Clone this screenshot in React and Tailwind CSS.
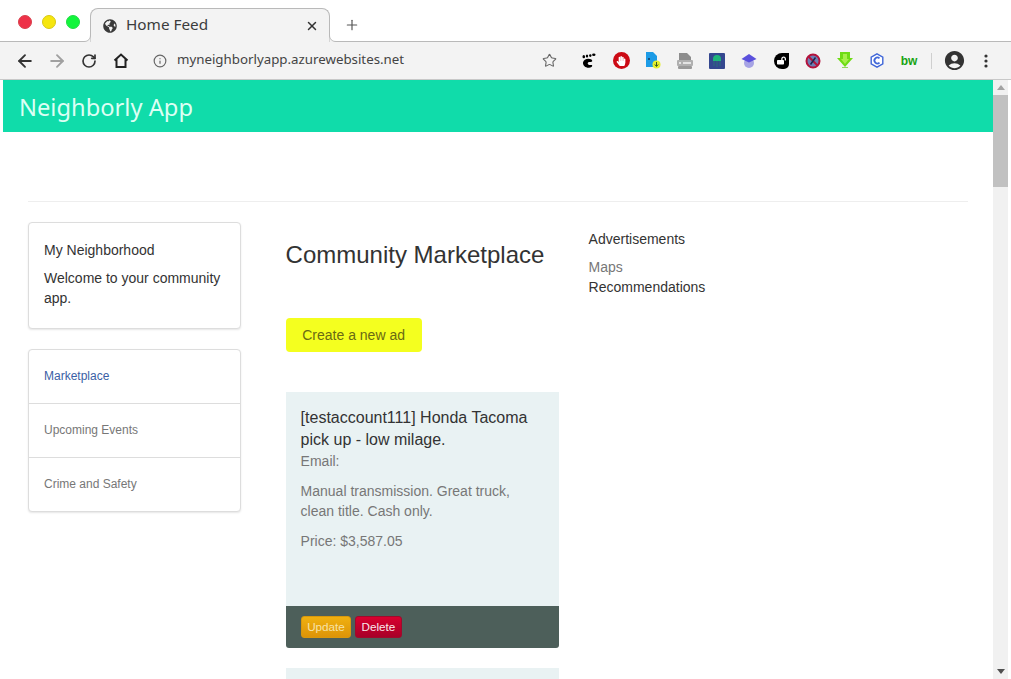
import React from 'react';
import { ArrowLeft, ArrowRight, RotateCw, Info, Star, Plus, X } from 'lucide-react';
import { FaGlobeAmericas, FaHandPaper, FaLockOpen } from 'react-icons/fa';
import { MdAccountCircle } from 'react-icons/md';

const sans = "font-['Liberation_Sans',Arial,sans-serif]";

const Gnome = () => (
  <svg width="14" height="15" viewBox="0 0 14 15" fill="#000">
    <path d="M9.500 6.500C6.500 4.800 1.500 5.800 1 9.500.6 12.800 4 15 7 14.700c2-.2 3.500-1.300 3.200-2.300-.3-1-1.800-.2-3-.4-1.500-.3-2-1.900-.9-2.700 1-.7 2.500-.2 3.300-.5.900-.4.800-1.400-.1-2.300z" />
    <ellipse cx="1.800" cy="3.700" rx="1.300" ry="1.600" />
    <ellipse cx="5" cy="3" rx="1.200" ry="1.500" />
    <ellipse cx="8.300" cy="2.600" rx="1.200" ry="1.300" />
    <ellipse cx="11.800" cy="1.800" rx="1.700" ry="1.200" />
  </svg>
);

const Blocker = () => (
  <div className="w-[17px] h-[17px] rounded-full bg-[#cc0a14] flex items-center justify-center">
    <FaHandPaper size={10} color="#fff" />
  </div>
);

const DocSave = () => (
  <svg width="16" height="17" viewBox="0 0 16 17">
    <path d="M1 0h7l4 4v11H1z" fill="#1c9be6" />
    <circle cx="4" cy="7" r="1" fill="#123a5c" />
    <circle cx="11.500" cy="12.500" r="4" fill="#e6f02c" />
    <path d="M11.500 10v4M9.800 12.500l1.700 2 1.700-2" stroke="#3c5a1c" strokeWidth="1" fill="none" />
  </svg>
);

const Printer = () => (
  <svg width="16" height="16" viewBox="0 0 16 16">
    <path d="M2 0h8l4 4v3H2z" fill="#8d8d8d" />
    <rect x="0" y="7" width="16" height="6" rx="1" fill="#b0b0b0" />
    <rect x="6" y="9" width="8" height="2" fill="#e4e4e4" />
    <rect x="2" y="9" width="2" height="2" fill="#e4e4e4" />
    <rect x="1" y="13" width="14" height="3" rx="1" fill="#9a9a9a" />
  </svg>
);

const Jelly = () => (
  <svg width="16" height="16" viewBox="0 0 16 16">
    <rect width="16" height="16" rx="1" fill="#34478f" />
    <path d="M4 6a4 4 0 0 1 8 0v2H4z" fill="#1fb57a" />
    <path d="M5 8v5M8 8v6M11 8v5" stroke="#2a6f78" strokeWidth="1" />
  </svg>
);

const Cap = () => (
  <svg width="16" height="16" viewBox="0 0 16 16">
    <circle cx="8" cy="10" r="5" fill="#a6a3e4" />
    <path d="M8 1l7.500 5L8 9.500.5 6z" fill="#5a50dc" />
  </svg>
);

const Lock = () => (
  <div className="w-[15px] h-[16px] rounded-l-[8px] rounded-br-[5px] bg-black flex items-center justify-center">
    <FaLockOpen size={9} color="#fff" />
  </div>
);

const NoBug = () => (
  <svg width="16" height="16" viewBox="0 0 16 16">
    <circle cx="8" cy="8" r="6.500" fill="#6f7fb4" stroke="#b3123c" strokeWidth="2" />
    <path d="M3.500 3.500l9 9" stroke="#b3123c" strokeWidth="2" />
    <path d="M10.500 4.500l-5 7" stroke="#1c2550" strokeWidth="1.500" />
  </svg>
);

const GreenArrow = () => (
  <svg width="16" height="17" viewBox="0 0 16 17">
    <path d="M3 0h10v6h3l-8 9-8-9h3z" fill="#6fdc16" />
    <path d="M6 2h4v5h2l-4 5-4-5h2z" fill="#a6f04a" />
    <rect x="5" y="15" width="6" height="1" fill="#8fd85a" />
  </svg>
);

const Hex = () => (
  <svg width="14" height="15" viewBox="0 0 14 15">
    <path d="M7 .8l5.800 3.300v6.800L7 14.200 1.200 10.900V4.100z" fill="#fff" stroke="#3f66d8" strokeWidth="1.400" />
    <path d="M9.500 5.300a3 3 0 1 0 0 4.400" fill="none" stroke="#3f66d8" strokeWidth="1.800" />
  </svg>
);

const HomeIcon = () => (
  <svg width="16" height="15" viewBox="0 0 16 15" fill="none" stroke="#222" strokeWidth="2">
    <path d="M1.500 7.500L8 1.500l6.500 6M3.500 6v8h9V6" />
  </svg>
);

const extensions = [Gnome, Blocker, DocSave, Printer, Jelly, Cap, Lock, NoBug, GreenArrow, Hex];

const ToolIcon = ({ children }) => (
  <div className="w-8 h-8 flex items-center justify-center shrink-0">{children}</div>
);

const BrowserChrome = () => (
  <div className="shrink-0 font-['Noto_Sans',sans-serif]">
    <div className="h-[42px] flex items-end border-b border-[#b9b9b9] bg-white pl-[18px]">
      <div className="flex gap-[10px] self-start mt-[15px]">
        <div className="w-[14px] h-[14px] rounded-full bg-[#ee3148] border border-[#d8404c]" />
        <div className="w-[14px] h-[14px] rounded-full bg-[#f6e60e] border border-[#d8c814]" />
        <div className="w-[14px] h-[14px] rounded-full bg-[#12f53c] border border-[#22dc44]" />
      </div>
      <div className="relative ml-[10px] w-[240px] h-[34px] -mb-px bg-[#f3f3f3] border border-b-0 border-[#b9b9b9] rounded-t-[8px] flex items-center pl-[12px] pr-[10px]">
        {/* little flares where the tab meets the toolbar */}
        <svg className="absolute left-[-7px] bottom-0" width="7" height="7" viewBox="0 0 7 7">
          <path d="M0 6.500C4 6.500 6.500 4 6.500 0V7H0z" fill="#f3f3f3" />
          <path d="M0 6.500C4 6.500 6.500 4 6.500 0" fill="none" stroke="#b9b9b9" />
        </svg>
        <svg className="absolute right-[-7px] bottom-0" width="7" height="7" viewBox="0 0 7 7">
          <path d="M7 6.500C3 6.500 .5 4 .5 0V7H7z" fill="#f3f3f3" />
          <path d="M7 6.500C3 6.500 .5 4 .5 0" fill="none" stroke="#b9b9b9" />
        </svg>
        <FaGlobeAmericas size={14} color="#3a3a3a" />
        <span className="ml-[9px] mb-[2px] text-[15.3px] text-[#3c3c3c] flex-1 leading-none">Home Feed</span>
        <X size={14} color="#333" strokeWidth={2.5} />
      </div>
      <div className="ml-[14px] mb-[8px]">
        <Plus size={16} color="#555" strokeWidth={1.75} />
      </div>
    </div>
    <div className="h-[38px] bg-[#f3f3f3] border-b border-[#c8c8c8] flex items-center pl-[9px] pr-[9px]">
      <ToolIcon><ArrowLeft size={20} color="#333" strokeWidth={2.25} /></ToolIcon>
      <ToolIcon><ArrowRight size={20} color="#a0a0a0" strokeWidth={2.25} /></ToolIcon>
      <ToolIcon><RotateCw size={16} color="#333" strokeWidth={2.5} /></ToolIcon>
      <ToolIcon><HomeIcon /></ToolIcon>
      <div className="ml-[16px]"><Info size={14} color="#666" /></div>
      <span className="ml-[10px] mb-[1px] text-[13.3px] text-[#444] flex-1 leading-none">myneighborlyapp.azurewebsites.net</span>
      <ToolIcon><Star size={15} color="#666" strokeWidth={1.75} /></ToolIcon>
      <div className="w-[8px]" />
      {extensions.map((Ext, i) => (
        <ToolIcon key={i}><Ext /></ToolIcon>
      ))}
      <ToolIcon><span className={`${sans} text-[12px] font-bold text-[#17a312] leading-none`}>bw</span></ToolIcon>
      <div className="mx-[6px] w-px h-[16px] bg-[#cfcfcf]" />
      <ToolIcon><MdAccountCircle size={23} color="#333" /></ToolIcon>
      <ToolIcon>
        <svg width="4" height="14" viewBox="0 0 4 14" fill="#333">
          <circle cx="2" cy="2" r="1.600" />
          <circle cx="2" cy="7" r="1.600" />
          <circle cx="2" cy="12" r="1.600" />
        </svg>
      </ToolIcon>
    </div>
  </div>
);

const Scrollbar = () => (
  <div className="w-[15px] shrink-0 bg-[#f1f1f1] flex flex-col items-center justify-between">
    <div className="w-full">
      <div className="h-[15px] flex items-center justify-center">
        <div className="w-0 h-0 border-x-[4px] border-x-transparent border-b-[5px] border-b-[#a3a3a3]" />
      </div>
      <div className="h-[92px] bg-[#c1c1c1]" />
    </div>
    <div className="h-[15px] flex items-center justify-center">
      <div className="w-0 h-0 border-x-[4px] border-x-transparent border-t-[5px] border-t-[#505050]" />
    </div>
  </div>
);

const navItems = [
  { label: 'Marketplace', active: true },
  { label: 'Upcoming Events' },
  { label: 'Crime and Safety' },
];

const Sidebar = () => (
  <div className="w-[213px] shrink-0">
    <div className="h-[107px] bg-white border border-[#ddd] rounded-[4px] shadow-[0_1px_2px_rgba(0,0,0,0.1)] px-[15px] pt-[17px] text-[14px] leading-[20px] text-[#333]">
      <p className="mb-[8px]">My Neighborhood</p>
      <p>Welcome to your community app.</p>
    </div>
    <div className="mt-[20px] bg-white border border-[#ddd] rounded-[4px] shadow-[0_1px_2px_rgba(0,0,0,0.1)]">
      {navItems.map((item) => (
        <div
          key={item.label}
          className={`h-[54px] flex items-center px-[15px] pb-[2px] text-[12px] border-b border-[#ddd] last:border-b-0 last:h-[53px] ${item.active ? 'text-[#3b5fa5]' : 'text-[#777]'}`}
        >
          {item.label}
        </div>
      ))}
    </div>
  </div>
);

const AdCard = () => (
  <div className="rounded-b-[3px] overflow-hidden">
    <div className="h-[214px] bg-[#e9f2f3] px-[15px] pt-[15px]">
      <h4 className="text-[16px] leading-[22px] text-[#333]">[testaccount111] Honda Tacoma pick up - low milage.</h4>
      <p className="text-[14px] leading-[20px] text-[#777]">Email:</p>
      <p className="mt-[10px] text-[14px] leading-[20px] text-[#777]">Manual transmission. Great truck, clean title. Cash only.</p>
      <p className="mt-[10px] text-[14px] leading-[20px] text-[#777]">Price: $3,587.05</p>
    </div>
    <div className="h-[42px] bg-[#4d5f5a] flex items-center gap-[4px] pl-[15.4px]">
      <button className="w-[50px] h-[22px] rounded-[3px] border border-[#d9980c] bg-gradient-to-b from-[#f0b010] to-[#dd9408] text-[11.7px] text-[#f7e3a6]">Update</button>
      <button className="w-[47px] h-[22px] rounded-[3px] border border-[#a00a2c] bg-gradient-to-b from-[#d8002f] to-[#a80028] text-[11.7px] text-[#fbe6ea]">Delete</button>
    </div>
  </div>
);

const Marketplace = () => (
  <div className="w-[273px] shrink-0 ml-[44.6px]">
    <h2 className="mt-[20px] text-[24px] leading-[26px] text-[#333]">Community Marketplace</h2>
    <button className="mt-[50px] block w-[136px] h-[34px] rounded-[4px] bg-[#f4ff1f] text-[14px] text-[#6a6a14]">Create a new ad</button>
    <div className="mt-[40px]">
      <AdCard />
    </div>
    <div className="mt-[20px] h-[214px] bg-[#e9f2f3]" />
  </div>
);

const SideLinks = () => (
  <div className="ml-[30px] pt-[7px] text-[14px] leading-[20px]">
    <p className="text-[#333] mb-[8px]">Advertisements</p>
    <p className="text-[#777]">Maps</p>
    <p className="text-[#333]">Recommendations</p>
  </div>
);

const App = () => (
  <div className={`h-[679px] w-[1011px] overflow-hidden flex flex-col bg-white ${sans}`}>
    <BrowserChrome />
    <div className="flex-1 min-h-0 flex pl-[3px] pr-[3px]">
      <div className="flex-1 min-w-0 overflow-hidden">
        <div className="h-[52px] bg-[#10dcaa] flex items-center pl-[16px] pt-[4px] font-['Noto_Sans',sans-serif] text-[23.7px] text-[#dcfff4] leading-none">
          Neighborly App
        </div>
        <div className="px-[25px]">
          <div className="mt-[69px] border-t border-[#eee]" />
          <div className="flex mt-[20px]">
            <Sidebar />
            <Marketplace />
            <SideLinks />
          </div>
        </div>
      </div>
      <Scrollbar />
    </div>
  </div>
);

export default App;
